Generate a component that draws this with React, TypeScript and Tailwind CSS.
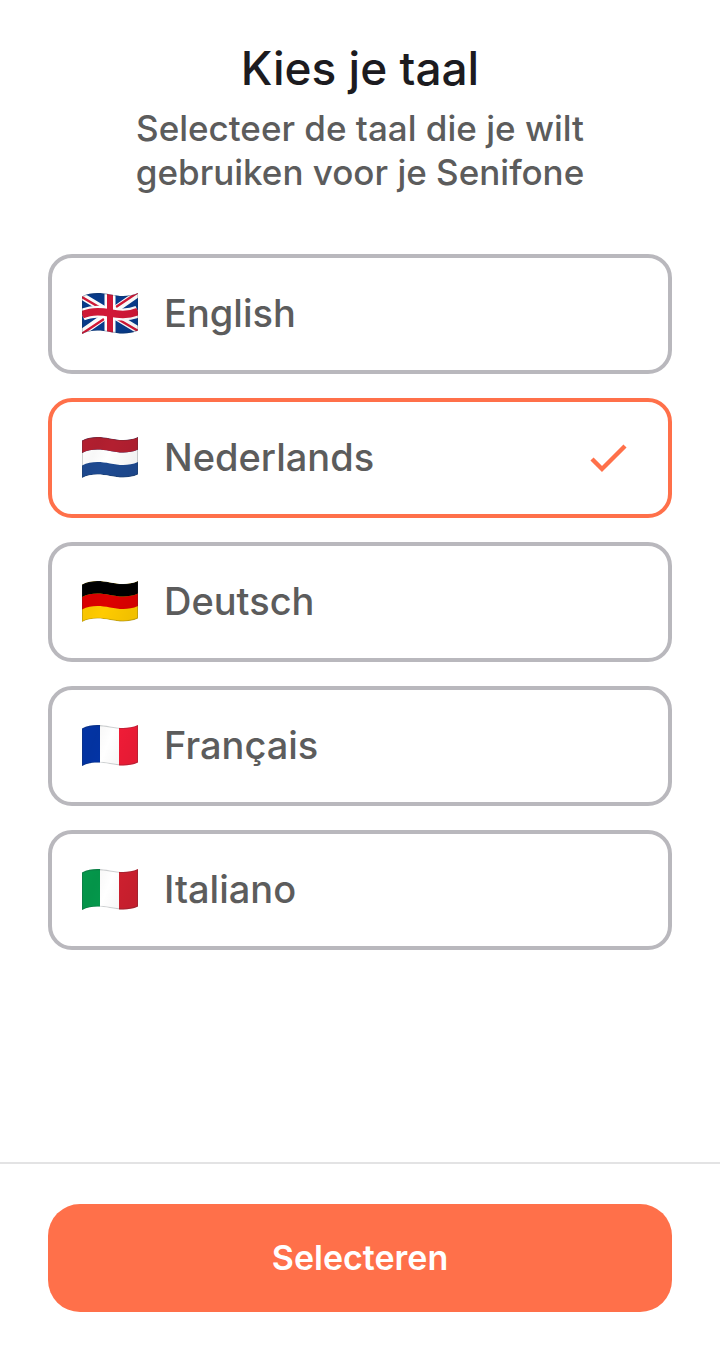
import { useState } from "react";
import type { ReactNode } from "react";

const WAVE = "M0 3.5C9-1 18-.5 28 1.5S47 4 56 0V37.5C47 41.5 38 41 28 39S9 36.5 0 41Z";

// one third of the flag height, following the wave
const BAND = "M0 3.5C9-1 18-.5 28 1.5S47 4 56 0V12.5C47 16.5 38 16 28 14S9 11.5 0 16Z";

const CROSSBAR = "M0 22C9 17.5 18 18 28 20S47 22.5 56 18.5";

const HorizontalBands = ({ colors }: { colors: string[] }) => (
  <>
    <path d={WAVE} fill={colors[2]} />
    <path d={BAND} fill={colors[1]} transform="translate(0 12.5)" />
    <path d={BAND} fill={colors[0]} />
  </>
);

const VerticalBands = ({ colors }: { colors: string[] }) => (
  <>
    <rect width="18" height="42" fill={colors[0]} />
    <rect x="18" width="19" height="42" fill={colors[1]} />
    <rect x="37" width="19" height="42" fill={colors[2]} />
  </>
);

const UnionJack = () => (
  <>
    <rect width="56" height="42" fill="#073b8c" />
    <path d="M-2 2L58 38M-2 41L58-1" stroke="#fff" strokeWidth="7" />
    <path d="M-2 3L22 17M-2 42L22 26M34 14L58-2M34 25L58 39" stroke="#d21837" strokeWidth="2.4" />
    <path d="M28-1V43" stroke="#fff" strokeWidth="11" />
    <path d={CROSSBAR} fill="none" stroke="#fff" strokeWidth="12" />
    <path d="M28-1V43" stroke="#d21837" strokeWidth="6" />
    <path d={CROSSBAR} fill="none" stroke="#d21837" strokeWidth="7.5" />
  </>
);

const Flag = ({ id, children }: { id: string; children: ReactNode }) => (
  <svg viewBox="0 0 56 42" className="h-[42px] w-14 shrink-0" aria-hidden="true">
    <defs>
      <clipPath id={`${id}-wave`}>
        <path d={WAVE} />
      </clipPath>
      <linearGradient id={`${id}-shade`} x1="0" x2="1" y1="0" y2="0.3">
        <stop offset="0" stopColor="#000" stopOpacity="0" />
        <stop offset="0.3" stopColor="#000" stopOpacity="0.03" />
        <stop offset="0.55" stopColor="#000" stopOpacity="0" />
        <stop offset="1" stopColor="#000" stopOpacity="0.05" />
      </linearGradient>
    </defs>
    <g clipPath={`url(#${id}-wave)`}>
      {children}
      <path d={WAVE} fill={`url(#${id}-shade)`} stroke="#263238" strokeOpacity="0.22" strokeWidth="2" />
    </g>
  </svg>
);

const languages = [
  { code: "en", name: "English", flag: <UnionJack /> },
  { code: "nl", name: "Nederlands", flag: <HorizontalBands colors={["#b31f30", "#fff", "#1e4a91"]} /> },
  { code: "de", name: "Deutsch", flag: <HorizontalBands colors={["#000", "#dd0000", "#ffcb00"]} /> },
  { code: "fr", name: "Français", flag: <VerticalBands colors={["#0334a5", "#fff", "#f21c37"]} /> },
  { code: "it", name: "Italiano", flag: <VerticalBands colors={["#04984b", "#fff", "#cf202f"]} /> },
];

export default function App() {
  const [selected, setSelected] = useState("nl");

  return (
    <div className="flex min-h-screen flex-col bg-white font-['Inter',sans-serif] font-medium text-[#5c5c5c]">
      <main className="flex-1 px-12 pt-10 pb-12">
        <header className="text-center">
          <h1 className="text-[46px] leading-[56px] text-[#1c1b20]">Kies je taal</h1>
          <p className="mx-auto mt-[10px] max-w-[520px] text-[35px] leading-[44px]">
            Selecteer de taal die je wilt gebruiken voor je Senifone
          </p>
        </header>

        <div role="radiogroup" aria-label="Taal" className="mt-[60px] flex flex-col gap-6">
          {languages.map(({ code, name, flag }) => (
            <label
              key={code}
              className="relative flex h-[120px] cursor-pointer items-center gap-[26px] rounded-3xl border-4 border-[#b9b8bd] pr-10 pl-[30px] has-checked:border-[#ff704a]"
            >
              <input
                type="radio"
                name="language"
                value={code}
                checked={selected === code}
                onChange={() => setSelected(code)}
                className="sr-only"
              />
              <Flag id={code}>{flag}</Flag>
              <span className="flex-1 pb-0.5 text-[38px] leading-[48px]">{name}</span>
              {selected === code && (
                <svg viewBox="0 0 40 40" className="size-10 shrink-0" fill="none" aria-hidden="true">
                  <path d="M4 21L14 31L37 8" stroke="#ff704a" strokeWidth="4.4" />
                </svg>
              )}
            </label>
          ))}
        </div>
      </main>

      <footer className="border-t-2 border-[#e3e3e4] px-12 pt-10 pb-12">
        <button
          type="button"
          className="h-[108px] w-full rounded-[32px] bg-[#ff704a] pb-0.5 text-[34px] font-semibold text-white"
        >
          Selecteren
        </button>
      </footer>
    </div>
  );
}
